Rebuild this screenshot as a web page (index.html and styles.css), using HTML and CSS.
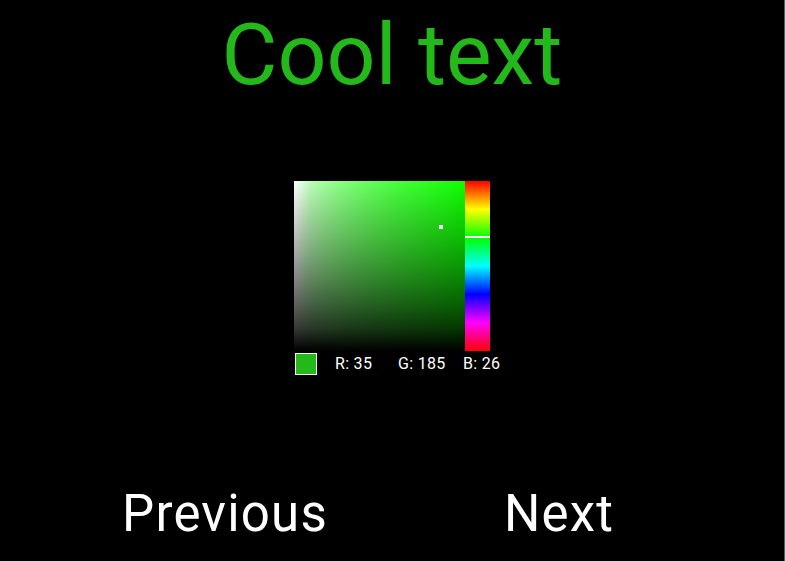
FILE: index.html
```html
<!DOCTYPE html>
<html lang="en">
<head>
    <meta charset="UTF-8">
    <meta name="viewport" content="width=device-width, initial-scale=1.0">
    <title>Color Picker</title>
    <link rel="stylesheet" href="styles.css">
</head>
<body>
    <div class="screen">
        <h1 class="title">Cool text</h1>

        <div class="picker">
            <div class="picker-main">
                <!-- saturation / value square -->
                <div class="sv-box">
                    <div class="sv-marker"></div>
                </div>
                <!-- hue strip -->
                <div class="hue-bar">
                    <div class="hue-marker"></div>
                </div>
            </div>
            <div class="picker-info">
                <div class="swatch"></div>
                <span class="val val-r">R: 35</span>
                <span class="val val-g">G: 185</span>
                <span class="val val-b">B: 26</span>
            </div>
        </div>

        <div class="nav">
            <button class="nav-btn">Previous</button>
            <button class="nav-btn">Next</button>
        </div>
    </div>
</body>
</html>
```

FILE: styles.css
```css
html, body {
    margin: 0;
    padding: 0;
    height: 100%;
    background-color: #000;
}
body {
    font-family: Roboto, "Noto Sans", sans-serif;
    color: #fff;
    overflow: hidden;
}
.screen {
    width: 784px;
    height: 561px;
    border-right: 1px solid #5c5c5c;
    display: flex;
    flex-direction: column;
    align-items: center;
}
.title {
    margin: 4px 0 0 0;
    font-size: 86px;
    font-weight: 400;
    line-height: 101px;
    color: #23b91a;
}
.picker {
    margin-top: 76px;
    width: 196px;
}
.picker-main {
    display: flex;
    height: 170px;
}
.sv-box {
    position: relative;
    width: 171px;
    height: 170px;
    background: linear-gradient(to top, #000, 40%, rgba(0, 0, 0, 0)),
                linear-gradient(to right, #fff, 28%, rgba(255, 255, 255, 0)),
                rgb(14, 255, 0);
}
.sv-marker {
    position: absolute;
    left: 145px;
    top: 44px;
    width: 4px;
    height: 4px;
    background: #fff;
}
.hue-bar {
    position: relative;
    width: 25px;
    height: 170px;
    background: linear-gradient(to bottom, #f00, #ff0, #0f0, #0ff, #00f, #f0f, #f00);
}
.hue-marker {
    position: absolute;
    left: 0;
    right: 0;
    top: 55px;
    height: 2px;
    background: #fff;
}
.picker-info {
    display: flex;
    align-items: center;
    margin-top: 2px;
    height: 22px;
    font-size: 16px;
    line-height: 20px;
    letter-spacing: 0.3px;
    white-space: nowrap;
}
.swatch {
    flex-shrink: 0;
    width: 20px;
    height: 20px;
    margin-left: 1px;
    border: 1px solid #fff;
    background: #23b91a;
}
.val {
    flex-shrink: 0;
}
.val-r {
    margin-left: 18px;
    width: 63px;
}
.val-g {
    width: 65px;
}
.nav {
    margin-top: auto;
    margin-bottom: 17px;
    display: grid;
    grid-template-columns: 334px 334px;
}
.nav-btn {
    background: none;
    border: none;
    padding: 0;
    font-family: inherit;
    font-size: 51px;
    letter-spacing: 1.2px;
    line-height: 60px;
    color: #fff;
    cursor: pointer;
}
```
